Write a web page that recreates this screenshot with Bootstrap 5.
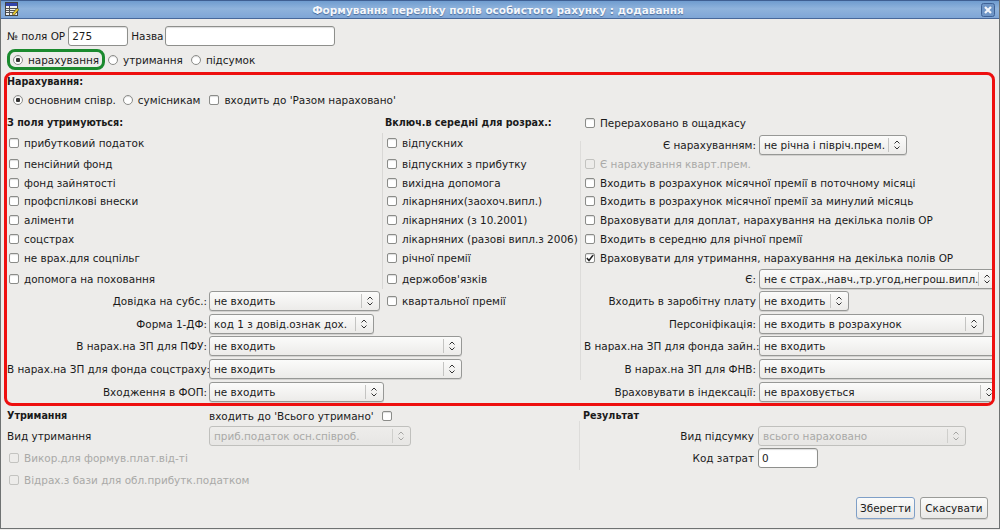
<!DOCTYPE html>
<html lang="uk">
<head>
<meta charset="utf-8">
<title>Формування переліку полів</title>
<link rel="stylesheet" href="https://cdn.jsdelivr.net/npm/bootstrap@5.3.0/dist/css/bootstrap.min.css">
<style>
html,body{margin:0;height:530px;overflow:hidden;background:#edecea}
body{font-family:"DejaVu Sans",sans-serif;font-size:10.45px;line-height:14px;color:#1a1a1a}
.dlg{width:1000px;height:529px;border:1px solid #6f7272;border-top:0;background:#edecea;overflow:hidden}
.ttl{height:19px;flex:none;margin:0 -1px;background:linear-gradient(#6f9ccf,#8fb3dc 45%,#7fa6d6);border-bottom:1px solid #47689a;border-top:1px solid #3f5f92;color:#f4f7fb;font-weight:700;font-size:10.5px;text-shadow:0 1px 1px #4a6b9c;padding:0 5px}
.ttl svg{flex:none}
.ttl-t{margin-right:4px}
.toprow{height:29px;flex:none;padding:4px 0 0 6px}
.fld{height:20px;border:1px solid #8e8f8c;border-radius:3px;background:#fff;font:10.45px "DejaVu Sans",sans-serif;padding:0 3px;color:#1a1a1a;box-shadow:inset 0 1px 1px #ddd;outline:0}
.f-no{width:60px;margin:0 3px}.f-name{width:170px;margin-left:1px}.f-zero{width:60px}
.kindrow{height:24px;flex:none;padding-left:6px}
.greenbox{border:3px solid #1b8a2e;border-radius:8px;height:21px;padding:0 3px;margin:-1px 0 0;width:98px}
.form-check-input.chk,.form-check-input.rad{width:10px;height:10px;margin:0 5px 0 0;float:none;flex:none;border:1px solid #8b8c89;background-color:#fff;box-shadow:inset 0 1px 1px #ddd;opacity:1}
.form-check-input.chk{border-radius:2px}
.form-check-input.rad{border-radius:50%;background-image:none}
.form-check-input.rad:checked{background-color:#fff;border-color:#8b8c89;background-image:radial-gradient(circle,#333 0 2px,transparent 2.5px)}
.form-check-input.chk:checked{background-color:#fff;border-color:#8b8c89;background-image:url("data:image/svg+xml,%3csvg xmlns='http://www.w3.org/2000/svg' viewBox='0 0 10 10'%3e%3cpath fill='none' stroke='%23222' stroke-width='1.5' d='M1.800 5l2.200 2.500L8.500 1.500'/%3e%3c/svg%3e");background-size:10px 10px}
.form-check-input:disabled{border-color:#c3c3c0;background-color:#edecea;box-shadow:none}
.dim{color:#a9a9a7}
.h-b{font-weight:700;font-size:9.6px}
.redbox{flex:none;margin:0 4px 0 3px;height:334px;border:3px solid #ee0f0f;border-radius:8px;overflow:hidden}
.ln-head{height:15px}
.ln-sub{height:23px;padding:0 0 4px 6px}
.cb{display:flex;align-items:center;white-space:nowrap;margin:0}
.cb.gap-k2{margin-left:3px}
.cb.gap-k3{margin-left:8px}
.cb.gap-r2{margin-left:7px}
.cb.gap-r3{margin-left:9px}
.cb-l{padding-left:2px}
.mygrid{display:grid;grid-template-columns:202px 176px 199px 175px 235px;grid-template-rows:20px 20px 21px 18px 18px 20px 18px 20px 21px 24px 22px 22px 23px 23px;align-items:center;white-space:nowrap}
.c1{grid-column:1/3}
.c2{grid-column:3}
.c3{grid-column:4/6;padding-left:1px}
.lb{grid-column:1;text-align:right;padding-right:2px}
.ct{grid-column:2;min-width:0}
.lb3{grid-column:4;text-align:right;padding-right:3px}
.ct3{grid-column:5}
.r1{grid-row:1}.r2{grid-row:2}.r3{grid-row:3}.r4{grid-row:4}.r5{grid-row:5}.r6{grid-row:6}.r7{grid-row:7}.r8{grid-row:8}.r9{grid-row:9}.r10{grid-row:10}.r11{grid-row:11}.r12{grid-row:12}.r13{grid-row:13}.r14{grid-row:14}
.lb3.r2,.ct3.r2{margin-top:3px}
.sep2{grid-column:3;grid-row:2/10;justify-self:start;align-self:stretch;width:1px;background:#d8d7d5;margin-left:-3px}
.sep3{grid-column:4;grid-row:2/14;justify-self:start;align-self:stretch;width:1px;background:#dddcda;margin:8px 0 0 -4px}
.form-select.cmb{height:20px;min-height:0;padding:0 18px 0 4px;font:10.45px "DejaVu Sans",sans-serif;color:#1a1a1a;border:1px solid #979896;border-radius:3px;box-shadow:0 1px 0 #d3d2d0;background-color:#f5f5f4;background-image:url("data:image/svg+xml,%3csvg xmlns='http://www.w3.org/2000/svg' width='20' height='18'%3e%3cpath stroke='%23c4c4c2' d='M2.500 2v14'/%3e%3cpath fill='none' stroke='%23333' stroke-width='1' d='M8.500 7.500l2.500-2.500 2.500 2.500M8.500 10.500l2.500 2.500 2.500-2.500'/%3e%3c/svg%3e"),linear-gradient(#fbfbfa,#ecebe9);background-size:20px 18px,100% 100%;background-position:right 0 center,0 0;background-repeat:no-repeat;outline:0;white-space:nowrap}
.form-select.cmb:disabled{color:#a9a9a7;border-color:#c0c0bd;box-shadow:none;background-image:url("data:image/svg+xml,%3csvg xmlns='http://www.w3.org/2000/svg' width='20' height='18'%3e%3cpath stroke='%23cfcfcc' d='M2.500 2v14'/%3e%3cpath fill='none' stroke='%23a5a5a3' stroke-width='1' d='M8.500 7.500l2.500-2.500 2.500 2.500M8.500 10.500l2.500 2.500 2.500-2.500'/%3e%3c/svg%3e"),linear-gradient(#eeedeb,#e7e6e4)}
.w148{width:148px}.w171{width:171px}.w165{width:165px}.w253{width:253px}.w175{width:175px}.w90{width:90px}.w225{width:225px}.w238{width:238px}.w240{width:240px}.w202{width:202px}.w208{width:208px}
.botgrid{flex:none;display:grid;grid-template-columns:202px 374px 175px 1fr;grid-template-rows:20px 20px 24px 19px;align-items:center;padding-left:6px;white-space:nowrap}
.b1{grid-column:1}.b2{grid-column:2}.b3{grid-column:3}.b4{grid-column:4}
.b12{grid-column:1/3}
.sep4{grid-column:3;grid-row:1/4;justify-self:start;align-self:stretch;width:1px;background:#dddcda;margin:15px 0 0 -4px}
.bt{height:22px;padding:0;font:10.45px "DejaVu Sans",sans-serif;color:#1a1a1a;background:linear-gradient(#fbfbfa,#e9e8e6);border:1px solid #9a9b98;border-radius:3px;box-shadow:0 1px 0 #d3d2d0}
.bt:hover{background:#f5f5f4;color:#1a1a1a;border-color:#9a9b98}
.bt-def{border-color:#7f9fc7;width:59px}
.bt-c{width:68px}
.foot{flex:none;padding:8px 11px 0 0;gap:5px}
.cap-l{padding-left:2px}
</style>
</head>
<body>
<div class="dlg d-flex flex-column">
  <div class="ttl d-flex align-items-center">
    <svg width="14" height="15" viewBox="0 0 14 15"><rect x=".5" y=".5" width="12" height="13" fill="#f1f1ee" stroke="#444"/><rect x="1" y="1" width="11" height="3" fill="#3344aa"/><path d="M1 6.500h11M1 8.500h11M1 10.500h11M4.500 4v9" stroke="#555"/><path d="M7 12l5-6 2 1.500-5 6z" fill="#e3c62f" stroke="#333" stroke-width=".6"/></svg>
    <span class="ttl-t flex-grow-1 text-center">Формування переліку полів особистого рахунку : додавання</span>
    <svg width="14" height="14" viewBox="0 0 14 14"><rect x=".5" y=".5" width="13" height="13" rx="2" fill="#6e95c6" stroke="#3f6296"/><path d="M4 4l6 6M10 4l-6 6" stroke="#f2f5fa" stroke-width="2.200"/></svg>
  </div>
  <div class="toprow d-flex align-items-center">
    <span>№ поля ОР</span><input class="fld f-no" value="275"><span>Назва</span><input class="fld f-name">
  </div>
  <div class="kindrow d-flex align-items-center">
    <label class="greenbox d-flex align-items-center"><input class="form-check-input rad" type="radio" name="k" checked>нарахування</label>
    <label class="cb gap-k2"><input class="form-check-input rad" type="radio" name="k">утримання</label>
    <label class="cb gap-k3"><input class="form-check-input rad" type="radio" name="k">підсумок</label>
  </div>
  <div class="redbox">
    <div class="ln-head h-b">Нарахування:</div>
    <div class="ln-sub d-flex align-items-center">
      <label class="cb"><input class="form-check-input rad" type="radio" name="b" checked>основним співр.</label>
      <label class="cb gap-r2"><input class="form-check-input rad" type="radio" name="b">сумісникам</label>
      <label class="cb gap-r3"><input class="form-check-input chk" type="checkbox">входить до 'Разом нараховано'</label>
    </div>
    <div class="mygrid">
      <div class="c1 r1 h-b">З поля утримуються:</div>
      <div class="c2 r1 h-b">Включ.в середні для розрах.:</div>
      <label class="c3 r1 cb"><input class="form-check-input chk" type="checkbox">Перераховано в ощадкасу</label>

      <i class="sep2"></i><i class="sep3"></i>

      <label class="c1 r2 cb cb-l"><input class="form-check-input chk" type="checkbox">прибутковий податок</label>
      <label class="c1 r3 cb cb-l"><input class="form-check-input chk" type="checkbox">пенсійний фонд</label>
      <label class="c1 r4 cb cb-l"><input class="form-check-input chk" type="checkbox">фонд зайнятості</label>
      <label class="c1 r5 cb cb-l"><input class="form-check-input chk" type="checkbox">профспілкові внески</label>
      <label class="c1 r6 cb cb-l"><input class="form-check-input chk" type="checkbox">аліменти</label>
      <label class="c1 r7 cb cb-l"><input class="form-check-input chk" type="checkbox">соцстрах</label>
      <label class="c1 r8 cb cb-l"><input class="form-check-input chk" type="checkbox">не врах.для соцпільг</label>
      <label class="c1 r9 cb cb-l"><input class="form-check-input chk" type="checkbox">допомога на поховання</label>

      <label class="c2 r2 cb cb-l"><input class="form-check-input chk" type="checkbox">відпускних</label>
      <label class="c2 r3 cb cb-l"><input class="form-check-input chk" type="checkbox">відпускних з прибутку</label>
      <label class="c2 r4 cb cb-l"><input class="form-check-input chk" type="checkbox">вихідна допомога</label>
      <label class="c2 r5 cb cb-l"><input class="form-check-input chk" type="checkbox">лікарняних(заохоч.випл.)</label>
      <label class="c2 r6 cb cb-l"><input class="form-check-input chk" type="checkbox">лікарняних (з 10.2001)</label>
      <label class="c2 r7 cb cb-l"><input class="form-check-input chk" type="checkbox">лікарняних (разові випл.з 2006)</label>
      <label class="c2 r8 cb cb-l"><input class="form-check-input chk" type="checkbox">річної премії</label>
      <label class="c2 r9 cb cb-l"><input class="form-check-input chk" type="checkbox">держобов'язків</label>
      <label class="c2 r10 cb cb-l"><input class="form-check-input chk" type="checkbox">квартальної премії</label>

      <div class="lb3 r2">Є нарахуванням:</div><div class="ct3 r2"><select class="form-select cmb w148"><option>не річна і півріч.прем.</option></select></div>
      <label class="c3 r3 cb dim"><input class="form-check-input chk" type="checkbox" disabled>Є нарахування кварт.прем.</label>
      <label class="c3 r4 cb"><input class="form-check-input chk" type="checkbox">Входить в розрахунок місячної премії в поточному місяці</label>
      <label class="c3 r5 cb"><input class="form-check-input chk" type="checkbox">Входить в розрахунок місячної премії за минулий місяць</label>
      <label class="c3 r6 cb"><input class="form-check-input chk" type="checkbox">Враховувати для доплат, нарахування на декілька полів ОР</label>
      <label class="c3 r7 cb"><input class="form-check-input chk" type="checkbox">Входить в середню для річної премії</label>
      <label class="c3 r8 cb"><input class="form-check-input chk" type="checkbox" checked>Враховувати для утримання, нарахування на декілька полів ОР</label>
      <div class="lb3 r9">Є:</div><div class="ct3 r9"><select class="form-select cmb w238"><option>не є страх.,навч.,тр.угод,негрош.випл.</option></select></div>
      <div class="lb3 r10">Входить в заробітну плату</div><div class="ct3 r10"><select class="form-select cmb w90"><option>не входить</option></select></div>
      <div class="lb3 r11">Персоніфікація:</div><div class="ct3 r11"><select class="form-select cmb w225"><option>не входить в розрахунок</option></select></div>
      <div class="lb3 r12">В нарах.на ЗП для фонда зайн.:</div><div class="ct3 r12"><select class="form-select cmb w253"><option>не входить</option></select></div>
      <div class="lb3 r13">В нарах.на ЗП для ФНВ:</div><div class="ct3 r13"><select class="form-select cmb w253"><option>не входить</option></select></div>
      <div class="lb3 r14">Враховувати в індексації:</div><div class="ct3 r14"><select class="form-select cmb w240"><option>не враховується</option></select></div>

      <div class="lb r10">Довідка на субс.:</div><div class="ct r10"><select class="form-select cmb w171"><option>не входить</option></select></div>
      <div class="lb r11">Форма 1-ДФ:</div><div class="ct r11"><select class="form-select cmb w165"><option>код 1 з довід.ознак дох.</option></select></div>
      <div class="lb r12">В нарах.на ЗП для ПФУ:</div><div class="ct r12"><select class="form-select cmb w253"><option>не входить</option></select></div>
      <div class="lb r13">В нарах.на ЗП для фонда соцстраху:</div><div class="ct r13"><select class="form-select cmb w253"><option>не входить</option></select></div>
      <div class="lb r14">Входження в ФОП:</div><div class="ct r14"><select class="form-select cmb w175"><option>не входить</option></select></div>
    </div>
  </div>
  <div class="botgrid">
    <div class="h-b b1 r1">Утримання</div>
    <label class="b2 r1 d-flex align-items-center m-0"><span class="me-2">входить до 'Всього утримано'</span><input class="form-check-input chk" type="checkbox"></label>
    <div class="h-b b3 r1">Результат</div>
    <div class="b1 r2">Вид утримання</div>
    <div class="b2 r2"><select class="form-select cmb w202" disabled><option>приб.податок осн.співроб.</option></select></div>
    <div class="b3 r2 text-end pe-1">Вид підсумку</div>
    <div class="b4 r2"><select class="form-select cmb w208" disabled><option>всього нараховано</option></select></div>
    <label class="b12 r3 cb dim cap-l"><input class="form-check-input chk" type="checkbox" disabled>Викор.для формув.плат.від-ті</label>
    <div class="b3 r3 text-end pe-1">Код затрат</div>
    <div class="b4 r3"><input class="fld f-zero" value="0"></div>
    <label class="b12 r4 cb dim cap-l"><input class="form-check-input chk" type="checkbox" disabled>Відрах.з бази для обл.прибутк.податком</label>
    <i class="sep4"></i>
  </div>
  <div class="foot d-flex justify-content-end">
    <button class="btn bt bt-def" type="button">Зберегти</button>
    <button class="btn bt bt-c" type="button">Скасувати</button>
  </div>
</div>
<script src="https://cdn.jsdelivr.net/npm/bootstrap@5.3.0/dist/js/bootstrap.bundle.min.js"></script>
</body>
</html>
